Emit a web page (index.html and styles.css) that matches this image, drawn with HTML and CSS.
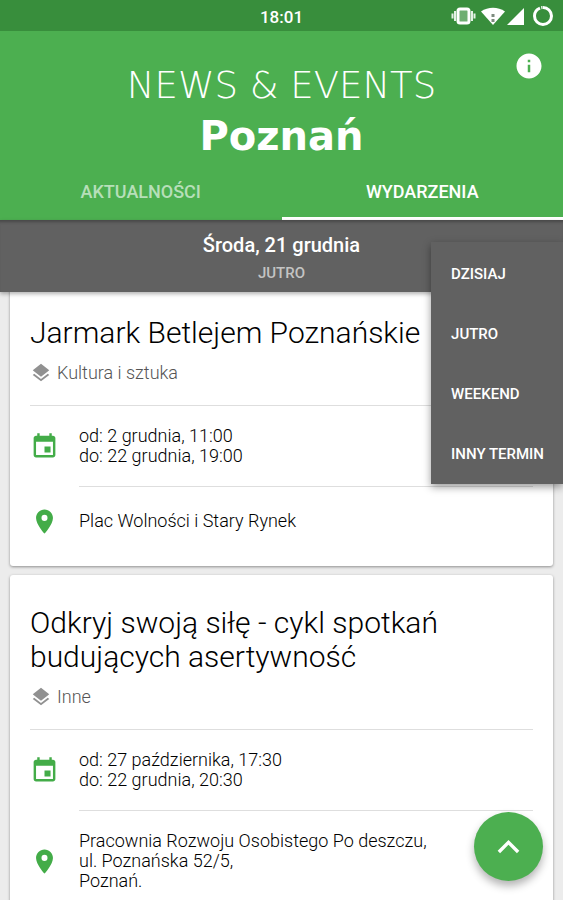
FILE: index.html
```html
<!DOCTYPE html>
<html lang="pl">
<head>
<meta charset="utf-8">
<meta name="viewport" content="width=device-width, initial-scale=1">
<title>News &amp; Events Poznań</title>
<link rel="stylesheet" href="styles.css">
</head>
<body>
<svg class="sprite" aria-hidden="true">
  <symbol id="layers" viewBox="0 0 24 24"><path d="M11.99 18.54l-7.37-5.73L3 14.07l9 7 9-7-1.63-1.27-7.38 5.74zM12 16l7.36-5.73L21 9l-9-7-9 7 1.63 1.27L12 16z"/></symbol>
  <symbol id="calendar" viewBox="0 0 24 24"><path d="M17 12h-5v5h5v-5zM16 1v2H8V1H6v2H5c-1.11 0-1.99.9-1.99 2L3 19c0 1.1.89 2 2 2h14c1.1 0 2-.9 2-2V5c0-1.1-.9-2-2-2h-1V1h-2zm3 18H5V8h14v11z"/></symbol>
  <symbol id="place" viewBox="0 0 24 24"><path d="M12 2C8.13 2 5 5.13 5 9c0 5.25 7 13 7 13s7-7.75 7-13c0-3.87-3.13-7-7-7zm0 9.5a2.5 2.5 0 0 1 0-5 2.5 2.5 0 0 1 0 5z"/></symbol>
</svg>

<header class="top">
  <div class="status">
    <span class="clock">18:01</span>
    <svg class="status-icons" viewBox="0 0 104 24" aria-hidden="true">
      <rect x="7" y="5" width="11" height="14" rx="2" fill="#6fae72" stroke="#fff" stroke-width="3"/>
      <path d="M4 7v10M21 7v10M1.500 9.500v5M23.500 9.500v5" stroke="#e4f1e5" stroke-width="2"/>
      <path d="M30 7.500C37 2.500 47 2.500 54 7.500L42 21z" fill="#fff"/>
      <path d="M42 10v3M42 15v3" stroke="#7d8b7e" stroke-width="3"/>
      <path d="M56 21L73 4v17z" fill="#fff"/>
      <circle cx="92" cy="12" r="8.500" fill="none" stroke="#fff" stroke-width="3" stroke-dasharray="50 1.300 1.300 .8" transform="rotate(-90 92 12)"/>
    </svg>
  </div>
  <div class="brand">
    <h1 class="logo"><span class="logo-light">NEWS &amp; EVENTS</span><span class="logo-bold">Poznań</span></h1>
    <button class="info" type="button" aria-label="Informacje">
      <svg viewBox="0 0 24 24"><path d="M12 2C6.480 2 2 6.480 2 12s4.480 10 10 10 10-4.480 10-10S17.520 2 12 2zm1 15h-2v-6h2v6zm0-8h-2V7h2v2z"/></svg>
    </button>
  </div>
  <nav class="tabs">
    <a class="tab" href="#news">AKTUALNOŚCI</a>
    <a class="tab active" href="#events" aria-current="page">WYDARZENIA</a>
  </nav>
  <div class="day">
    <h2 class="date">Środa, 21 grudnia</h2>
    <p class="relative-day">JUTRO</p>
    <div class="menu">
      <button type="button">DZISIAJ</button>
      <button type="button">JUTRO</button>
      <button type="button">WEEKEND</button>
      <button type="button">INNY TERMIN</button>
    </div>
  </div>
</header>

<main class="events" id="events">
  <article class="card">
    <h3 class="title">Jarmark Betlejem Poznańskie</h3>
    <p class="category"><svg><use href="#layers"/></svg>Kultura i sztuka</p>
    <div class="row first"><svg><use href="#calendar"/></svg><p>od: 2 grudnia, 11:00<br>do: 22 grudnia, 19:00</p></div>
    <div class="row"><svg><use href="#place"/></svg><p>Plac Wolności i Stary Rynek</p></div>
  </article>
  <article class="card">
    <h3 class="title">Odkryj swoją siłę - cykl spotkań budujących asertywność</h3>
    <p class="category"><svg><use href="#layers"/></svg>Inne</p>
    <div class="row first"><svg><use href="#calendar"/></svg><p>od: 27 października, 17:30<br>do: 22 grudnia, 20:30</p></div>
    <div class="row"><svg><use href="#place"/></svg><p>Pracownia Rozwoju Osobistego Po deszczu,<br>ul. Poznańska 52/5,<br>Poznań.</p></div>
  </article>
</main>

<button class="fab" type="button" aria-label="Do góry">
  <svg viewBox="0 0 24 24"><path d="M5 16l7-7 7 7" fill="none" stroke="#fff" stroke-width="2.500"/></svg>
</button>
</body>
</html>
```
FILE: styles.css
```css
* { box-sizing: border-box; }
body, h1, h2, h3, p { margin: 0; }
body {
  background: #ececec;
  color: #000;
  font: 300 18px/20px Roboto, sans-serif;
  height: 100vh;
  overflow: hidden;
}
button { border: 0; padding: 0; background: none; font: inherit; color: inherit; cursor: pointer; }
a { color: inherit; text-decoration: none; }
svg { display: block; fill: currentColor; }
.sprite { display: none; }

.top { position: relative; z-index: 2; color: #fff; background: #4caf50; }
.status {
  display: grid;
  grid-template-columns: 1fr auto 1fr;
  align-items: center;
  height: 31px;
  padding: 0 8px;
  background: #388e3c;
}
.clock { grid-column: 2; font-size: 17px; font-weight: 500; padding-top: 2px; }
.status-icons { grid-column: 3; justify-self: end; width: 104px; height: 24px; }

.brand { position: relative; padding-top: 33px; }
.logo { display: flex; flex-direction: column; align-items: center; font-family: "DejaVu Sans", sans-serif; }
.logo-light { font-size: 37px; line-height: 44px; font-weight: 200; }
.logo-bold { font-size: 40px; line-height: 56px; font-weight: 700; }
.info { position: absolute; top: 20px; right: 19px; }
.info svg { width: 30px; height: 30px; }

.tabs { display: grid; grid-template-columns: 1fr 1fr; }
.tab {
  height: 56px;
  padding-top: 18px;
  border-bottom: 3px solid transparent;
  text-align: center;
  font-size: 18px;
  font-weight: 500;
  color: #b7dfb9;
}
.tab.active { color: #fff; border-color: #fff; }

.day {
  position: relative;
  height: 72px;
  padding-top: 13px;
  text-align: center;
  background: #616161;
  box-shadow: inset 0 4px 3px -2px #484848, 0 2px 4px rgba(0, 0, 0, .3);
}
.date { font-size: 20px; line-height: 24px; font-weight: 500; }
.relative-day { margin-top: 6px; font-size: 15px; font-weight: 500; color: #c4c4c4; }
.menu {
  position: absolute;
  top: 22px;
  right: 0;
  display: flex;
  flex-direction: column;
  padding: 2px 19px 0 20px;
  background: #616161;
  box-shadow: 0 3px 8px rgba(0, 0, 0, .4);
}
.menu button { height: 60px; text-align: left; font-size: 15px; font-weight: 500; }

.events { display: flex; flex-direction: column; gap: 9px; margin-top: -7px; padding: 0 10px; }
.card { padding: 31px 20px 11px; background: #fff; border-radius: 3px; box-shadow: 0 1px 3px rgba(0, 0, 0, .4); }
.title { font-size: 30px; line-height: 34px; font-weight: 300; }
.category { display: flex; align-items: center; gap: 5px; margin: 12px 0 21px; color: #555; }
.category svg { width: 22px; height: 22px; color: #919191; }
.row { position: relative; display: flex; align-items: center; margin-left: 49px; padding: 20px 0; border-top: 1px solid #dedede; }
.row.first { margin-left: 0; padding-left: 49px; }
.row svg { position: absolute; left: -49px; width: 29px; height: 29px; color: #43ac48; }
.row.first svg { left: 0; }
.row p { display: flow-root; align-content: center; min-height: 28px; }

.fab {
  position: fixed;
  right: 20px;
  bottom: 19px;
  z-index: 3;
  display: grid;
  place-items: center;
  width: 69px;
  height: 69px;
  border-radius: 50%;
  background: #4caf50;
  box-shadow: 0 5px 8px rgba(0, 0, 0, .3);
}
.fab svg { width: 33px; height: 33px; }
```
